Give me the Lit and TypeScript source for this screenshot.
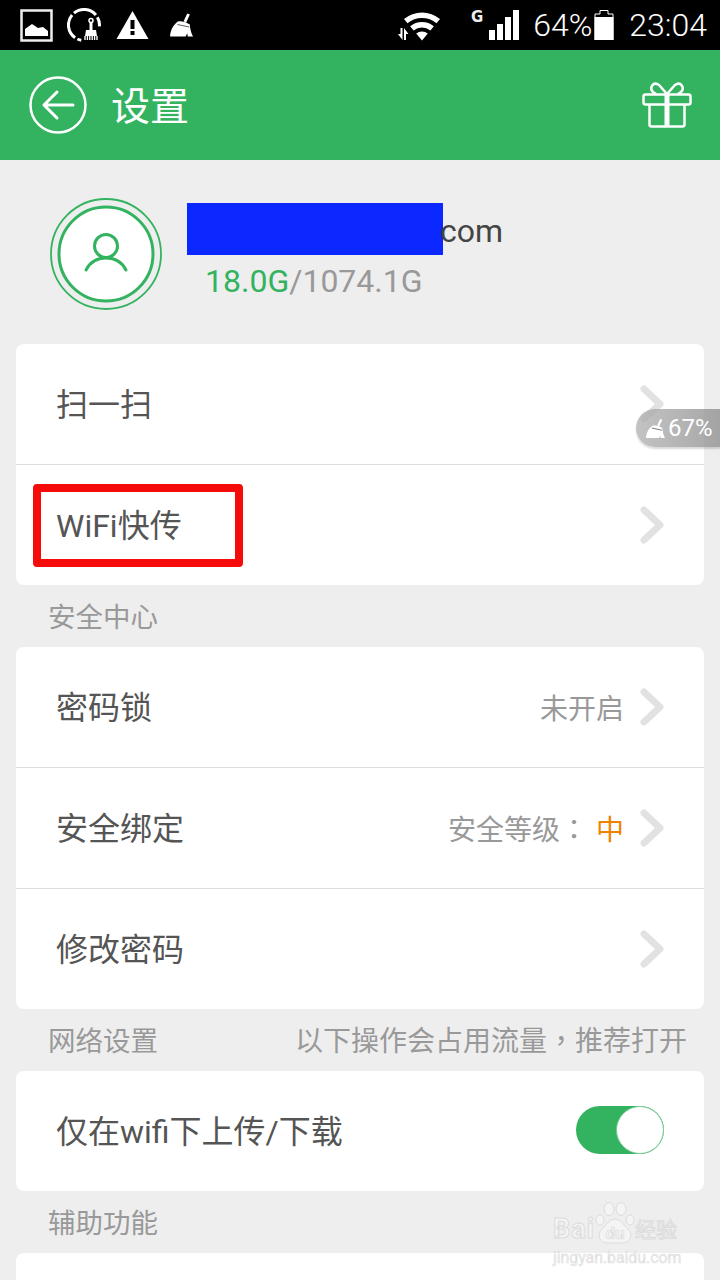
import { LitElement, html, css, svg } from 'lit';
import { customElement } from 'lit/decorators.js';

const chevron = html`<svg class="chev" viewBox="0 0 24 38" width="24" height="38">
  <path d="M4 4 L20 19 L4 34" fill="none" stroke="#e2e2e2" stroke-width="7" stroke-linecap="round" stroke-linejoin="round" />
</svg>`;

const broom = svg`
  <path d="M17.5 0 L20 1 L16.5 8.5 L14 7.5 Z" fill="#fff" />
  <path d="M9 7.5 Q14 6.5 20 10.5 C20 14 21 18 23 22 H18 L17.5 19 L16 22 H1 C1.5 15 5 10 9 7.5 Z" fill="#fff" />
  <path d="M8 10.5 L19.5 13" stroke="#000" stroke-opacity="0.6" stroke-width="1" />
`;

@customElement('app-root')
export class AppRoot extends LitElement {
  static styles = css`
    :host {
      display: block;
      position: relative;
      width: 720px;
      height: 1280px;
      overflow: hidden;
      background: #eeeeee;
      font-family: Roboto, 'Noto Sans CJK SC', sans-serif;
      color: #555555;
    }
    svg {
      display: block;
      flex: none;
    }
    .tc {
      font-family: 'Noto Sans CJK TC', sans-serif;
    }
    .status {
      height: 50px;
      background: #000;
      color: #fff;
      display: flex;
      align-items: center;
      padding: 0 13px 0 20px;
    }
    .status .left {
      display: flex;
      align-items: center;
    }
    .status .right {
      margin-left: auto;
      display: flex;
      align-items: center;
    }
    .status .txt {
      font-size: 32px;
      line-height: 50px;
      font-weight: 300;
    }
    .header {
      height: 110px;
      background: #33b35f;
      display: flex;
      align-items: center;
      padding: 0 28px 0 29px;
      color: #fff;
    }
    .header .title {
      font-size: 39px;
      margin-left: 24px;
      line-height: 50px;
      padding-top: 3px;
    }
    .header .gift {
      margin-left: auto;
    }
    .profile {
      height: 184px;
      display: flex;
      padding-left: 50px;
    }
    .avatar {
      margin-top: 38px;
    }
    .info {
      margin-left: 25px;
      margin-top: 43px;
    }
    .mail {
      display: flex;
      height: 52px;
      font-size: 32px;
      line-height: 56px;
      color: #444;
    }
    .mask {
      width: 256px;
      height: 52px;
      background: #0a28ff;
      margin-right: -3px;
    }
    .quota {
      margin: 4px 0 0 18px;
      font-size: 32px;
      line-height: 44px;
      color: #999;
    }
    .quota b {
      font-weight: 400;
      color: #33b35f;
    }
    .card {
      margin: 0 16px;
      background: #fff;
      border-radius: 8px;
    }
    .row {
      height: 120px;
      display: flex;
      align-items: center;
      padding: 0 40px;
      font-size: 32px;
      border-top: 1px solid #dedede;
    }
    .row:first-child {
      border-top: none;
    }
    .row .label {
      padding-bottom: 4px;
    }
    .row .val {
      margin-left: auto;
      font-size: 28px;
      color: #999;
      margin-right: 16px;
    }
    .row .val em {
      font-style: normal;
      color: #ef8200;
      margin-left: 8px;
    }
    .row .chev {
      margin-left: auto;
    }
    .row .val + .chev {
      margin-left: 0;
    }
    .section {
      height: 62px;
      display: flex;
      align-items: center;
      justify-content: space-between;
      padding: 0 33px 2px 48px;
      box-sizing: border-box;
      font-size: 27.5px;
      color: #999;
    }
    .section span + span {
      font-size: 28px;
    }
    .toggle {
      margin-left: auto;
      margin-bottom: 2px;
      width: 88px;
      height: 48px;
      border-radius: 24px;
      background: #33b35f;
      display: flex;
      justify-content: flex-end;
    }
    .toggle i {
      width: 48px;
      height: 48px;
      box-sizing: border-box;
      border-radius: 50%;
      background: #fff;
      border: 1.5px solid #7dcc98;
    }
    .last {
      height: 60px;
      border-radius: 8px 8px 0 0;
    }
    .mark {
      position: absolute;
      left: 33px;
      top: 484px;
      width: 210px;
      height: 83px;
      box-sizing: border-box;
      border: 8px solid #f60b0b;
      border-radius: 4px;
    }
    .float {
      position: absolute;
      left: 636px;
      top: 409px;
      width: 84px;
      height: 38px;
      border-radius: 19px 0 0 19px;
      background: linear-gradient(90deg, rgba(175, 175, 175, 0.75), rgba(145, 145, 145, 0.8));
      box-shadow: 0 2px 2px rgba(0, 0, 0, 0.15);
      display: flex;
      align-items: center;
      padding-left: 9px;
      box-sizing: border-box;
      color: #fff;
      font-size: 24px;
      gap: 3px;
    }
    .wm {
      position: absolute;
      left: 553px;
      top: 1202px;
      width: 130px;
      color: #f4f4f4;
      -webkit-text-stroke: 1px #dcdcdc;
    }
    .wm .top {
      display: flex;
      align-items: flex-end;
      height: 42px;
    }
    .wm .bai {
      font-size: 27px;
      font-weight: 700;
      line-height: 30px;
      width: 42px;
      letter-spacing: 1px;
    }
    .wm .jy {
      font-size: 21px;
      line-height: 27px;
      white-space: nowrap;
    }
    .wm .url {
      font-size: 15.8px;
      line-height: 16px;
      margin-top: 6px;
      white-space: nowrap;
      color: #f0f0f0;
      -webkit-text-stroke: 0.5px #dcdcdc;
    }
  `;

  render() {
    return html`
      <div class="status">
        <div class="left">
          <svg width="33" height="33" viewBox="0 0 33 33">
            <rect x="1.5" y="1.5" width="30" height="30" fill="none" stroke="#eee" stroke-width="2.5" />
            <path d="M5 27 V20 L12 15 L18 19 L23 18 L28 22 V27 Z" fill="#fff" />
          </svg>
          <svg style="margin-left:14px" width="34" height="36" viewBox="0 0 34 36">
            <path d="M14.3 33.3 A15.5 15.5 0 0 1 10.4 32 M8.1 30.7 A15.5 15.5 0 0 1 5.1 8 M7 6.1 A15.5 15.5 0 0 1 28.9 8 M30.4 10.2 A15.5 15.5 0 0 1 32.4 19.4" fill="none" stroke="#fff" stroke-width="3" />
            <circle cx="24" cy="13.5" r="2" fill="none" stroke="#fff" stroke-width="1.5" />
            <rect x="22.5" y="15" width="3" height="8" fill="#fff" />
            <path d="M19 23 H29 L30 29 H18 Z" fill="#fff" />
            <path d="M18 29 V33 M20.4 29 V33 M22.8 29 V33 M25.2 29 V33 M27.6 29 V33 M30 29 V33" stroke="#fff" stroke-width="1.4" />
          </svg>
          <svg style="margin-left:15px" width="33" height="30" viewBox="0 0 33 30">
            <path d="M16.5 1 L32.5 29 H0.5 Z" fill="#fff" />
            <rect x="14.5" y="10" width="4" height="9" fill="#000" />
            <rect x="14.5" y="21" width="4" height="4" fill="#000" />
          </svg>
          <svg style="margin-left:20px" width="24" height="24" viewBox="0 0 23 22">${broom}</svg>
        </div>
        <div class="right">
          <svg width="44" height="32" viewBox="0 0 44 32" style="margin-right:29px">
            <path d="M6 10.1 A28 28 0 0 1 42 10.1 L38.5 14.3 A22.5 22.5 0 0 0 9.5 14.3 Z" fill="#fff" />
            <path d="M12.1 17.3 A18.5 18.5 0 0 1 35.9 17.3 L32.4 21.5 A13 13 0 0 0 15.6 21.5 Z" fill="#fff" />
            <path d="M18.2 24.6 A9 9 0 0 1 29.8 24.6 L24 31.5 Z" fill="#fff" />
            <path d="M0 25 H2.5 V19 H4.5 V31 Z M6 31 V19 L10.5 25 H8 V31 Z" fill="#fff" />
          </svg>
          <svg width="50" height="32" viewBox="0 0 50 32" style="margin-right:12px">
            <text x="0" y="13" font-family="'DejaVu Sans', sans-serif" font-size="15" font-weight="700" fill="#eee">G</text>
            <rect x="18" y="21" width="6" height="10" fill="#fff" />
            <rect x="26" y="15" width="6" height="16" fill="#fff" />
            <rect x="34" y="8" width="6" height="23" fill="#fff" />
            <rect x="42" y="1" width="6" height="30" fill="#fff" />
          </svg>
          <span class="txt">64%</span>
          <svg width="20" height="30" viewBox="0 0 20 30" style="margin:0 15px 0 2px">
            <path d="M1 30 V4 H6 V0.5 H14 V4 H19 V30 Z" fill="#000" stroke="#fff" stroke-width="1" />
            <rect x="0.5" y="7" width="19" height="23" fill="#fff" />
          </svg>
          <span class="txt">23:04</span>
        </div>
      </div>

      <div class="header">
        <svg width="58" height="58" viewBox="0 0 58 58">
          <circle cx="29" cy="29" r="27.5" fill="none" stroke="#fff" stroke-width="2.5" />
          <path d="M44 29 H15 M28 16 L15 29 L28 42" fill="none" stroke="#fff" stroke-width="3" stroke-linecap="round" stroke-linejoin="round" />
        </svg>
        <span class="title">设置</span>
        <svg class="gift" width="50" height="46" viewBox="0 0 50 46">
          <path d="M25 12 L17 3 C11 -1 7 6 11 10 L14 12 M25 12 L33 3 C39 -1 43 6 39 10 L36 12" fill="none" stroke="#fff" stroke-width="2.5" />
          <rect x="1.5" y="12.5" width="47" height="10" rx="2" fill="none" stroke="#fff" stroke-width="2.5" />
          <path d="M7.5 23 V42.5 Q7.5 44.5 9.5 44.5 H40.5 Q42.5 44.5 42.5 42.5 V23" fill="none" stroke="#fff" stroke-width="2.5" />
          <rect x="22.5" y="12.5" width="5" height="32" fill="#fff" />
        </svg>
      </div>

      <div class="profile">
        <svg class="avatar" width="112" height="112" viewBox="0 0 112 112">
          <circle cx="56" cy="56" r="55" fill="none" stroke="#33b35f" stroke-width="1.8" />
          <circle cx="56" cy="56" r="47" fill="#fff" stroke="#33b35f" stroke-width="3" />
          <circle cx="56" cy="48" r="11.5" fill="none" stroke="#33b35f" stroke-width="3" />
          <path d="M36 72 C40 64 47 60 56 60 C65 60 72 64 76 72" fill="none" stroke="#33b35f" stroke-width="3" stroke-linecap="round" />
        </svg>
        <div class="info">
          <div class="mail"><div class="mask"></div>com</div>
          <div class="quota"><b>18.0G</b>/1074.1G</div>
        </div>
      </div>

      <div class="card">
        <div class="row"><span class="label">扫一扫</span>${chevron}</div>
        <div class="row"><span class="label">WiFi快传</span>${chevron}</div>
      </div>
      <div class="section"><span>安全中心</span></div>
      <div class="card">
        <div class="row"><span class="label">密码锁</span><span class="val">未开启</span>${chevron}</div>
        <div class="row">
          <span class="label">安全绑定</span>
          <span class="val">安全等级<span class="tc">：</span><em>中</em></span>${chevron}
        </div>
        <div class="row"><span class="label">修改密码</span>${chevron}</div>
      </div>
      <div class="section">
        <span>网络设置</span>
        <span>以下操作会占用流量<span class="tc">，</span>推荐打开</span>
      </div>
      <div class="card">
        <div class="row"><span class="label">仅在wifi下上传/下载</span><div class="toggle"><i></i></div></div>
      </div>
      <div class="section"><span>辅助功能</span></div>
      <div class="card last"></div>

      <div class="mark"></div>
      <div class="float">
        <svg width="20" height="19" viewBox="0 0 23 22">${broom}</svg>
        <span>67%</span>
      </div>
      <div class="wm">
        <div class="top">
          <span class="bai">Bai</span>
          <svg width="40" height="42" viewBox="0 0 40 42">
            <g fill="#f4f4f4" stroke="#dcdcdc" stroke-width="1">
              <ellipse cx="5" cy="18" rx="4" ry="5" />
              <ellipse cx="14" cy="7" rx="5" ry="6.5" />
              <ellipse cx="26" cy="7" rx="5" ry="6.5" />
              <ellipse cx="35" cy="18" rx="4" ry="5" />
              <path d="M20 17 C26 17 28 23 33 27 C39 33 35 41 28 41 H12 C5 41 1 33 7 27 C12 23 14 17 20 17 Z" />
            </g>
            <text x="20" y="37" text-anchor="middle" font-family="Roboto, sans-serif" font-size="17" font-weight="700" fill="#f4f4f4" stroke="#dcdcdc" stroke-width="0.7">du</text>
          </svg>
          <span class="jy">经验</span>
        </div>
        <div class="url">jingyan.baidu.com</div>
      </div>
    `;
  }
}
